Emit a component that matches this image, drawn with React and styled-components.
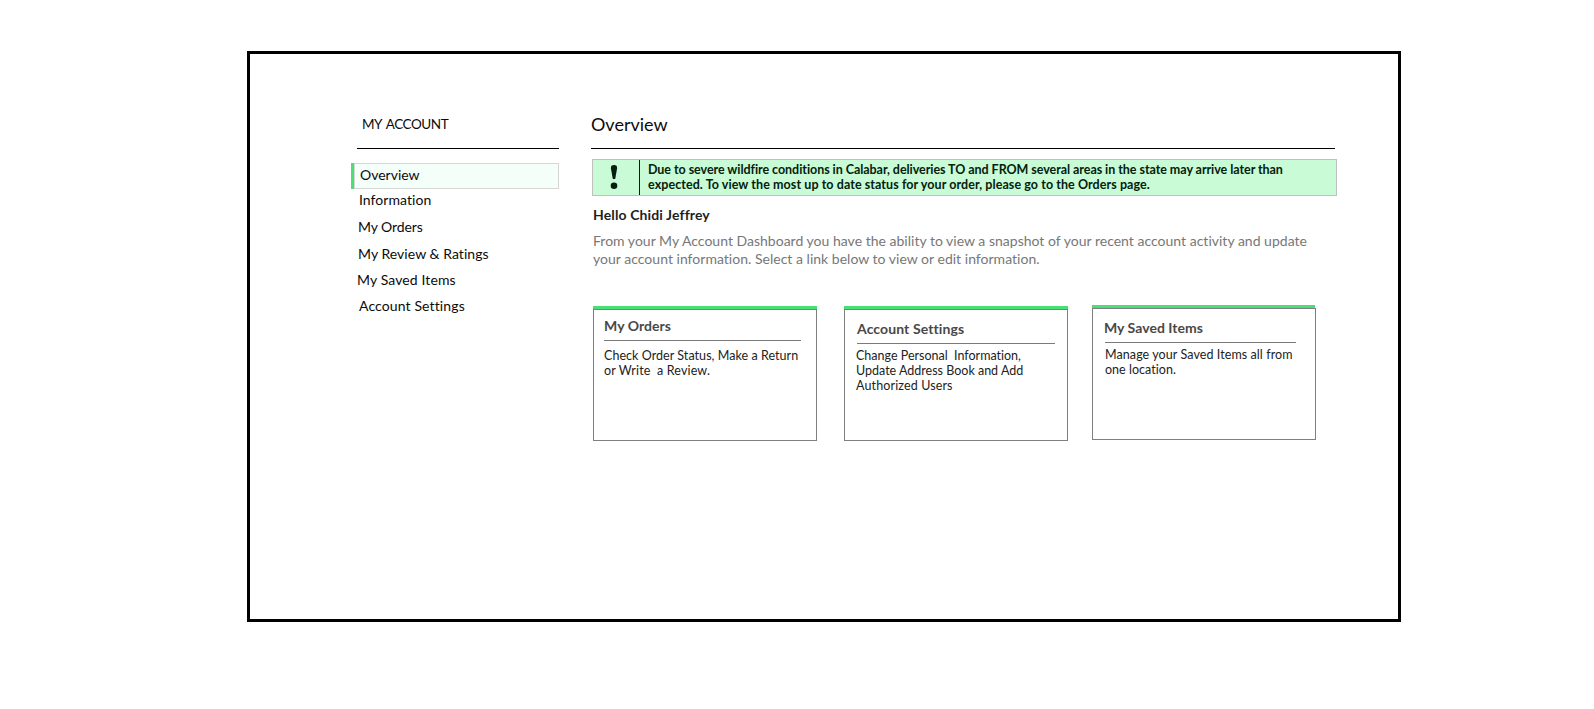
import React from 'react';
import styled, { createGlobalStyle } from 'styled-components';

const GlobalStyle = createGlobalStyle`
  * { box-sizing: border-box; }
  body {
    margin: 0;
    background: #fff;
    color: #0b0b0b;
    font-family: Lato, "Liberation Sans", sans-serif;
    font-variant-ligatures: none;
  }
  h1, h2, h3, p, ul { margin: 0; padding: 0; font-weight: 400; }
`;

const Frame = styled.div`
  width: 1154px;
  height: 571px;
  margin: 51px 0 0 247px;
  padding-left: 101px;
  border: 3px solid #000;
  display: flex;
  gap: 32px;
`;

const Page = styled.div`
  display: flow-root;
`;

const Sidebar = styled.aside`
  width: 208px;
`;

const SidebarTitle = styled.h2`
  height: 95px;
  margin-left: 6px;
  padding: 61px 0 0 5px;
  border-bottom: 1px solid #000;
  font-size: 13.5px;
  line-height: 18px;
  letter-spacing: -0.42px;
  word-spacing: 1.5px;
`;

const Nav = styled.ul`
  margin-top: 14px;
  list-style: none;
`;

const NavItem = styled.li`
  margin-top: ${(p) => p.$gap}px;
  padding-left: ${(p) => p.$indent}px;
  font-size: 14px;
  line-height: 18px;
  letter-spacing: ${(p) => p.$track || 0}px;
`;

const ActiveItem = styled.li`
  height: 26px;
  display: flex;
  border-left: 3px solid #4ade76;
  font-size: 14px;
  line-height: 18px;
`;

const ActiveLabel = styled.span`
  flex: 1;
  padding: 2px 0 0 5px;
  background: #f5fffa;
  border: 1px solid #d6d6d6;
`;

const Main = styled.main`
  width: 746px;
`;

const Heading = styled.h1`
  width: 744px;
  height: 95px;
  padding-top: 59px;
  border-bottom: 1px solid #000;
  font-size: 18px;
  line-height: 22px;
`;

const Alert = styled.div`
  height: 37px;
  margin: 10px 0 0 1px;
  display: flex;
  background: #c9fbd6;
  border: 1px solid #c0c0c0;
  color: #03210c;
`;

const AlertMark = styled.div`
  width: 47px;
  display: flex;
  justify-content: center;
  padding: 5px 4px 0 0;
  border-right: 1px solid #03210c;
`;

const AlertText = styled.div`
  padding: 2px 0 0 8px;
  font-size: 12.5px;
  line-height: 15px;
  font-weight: 700;
  white-space: nowrap;
`;

const Line = styled.div`
  letter-spacing: ${(p) => p.$track || 0}px;
  white-space: pre;
`;

const Greeting = styled.h2`
  margin: 10px 0 0 2px;
  font-size: 14px;
  line-height: 18px;
  font-weight: 700;
  letter-spacing: 0.12px;
  color: #1e1e1e;
`;

const Intro = styled.div`
  margin: 8px 0 0 2px;
  font-size: 14px;
  line-height: 18px;
  color: #777;
`;

const Cards = styled.div`
  display: flex;
  align-items: flex-start;
  margin: 38px 0 0 2px;
`;

const Card = styled.section`
  width: 224px;
  height: 135px;
  margin-left: ${(p) => p.$gap}px;
  margin-top: ${(p) => p.$lift}px;
`;

const Accent = styled.div`
  width: ${(p) => p.$width}px;
  height: 3px;
  background: #4ade76;
`;

const CardBody = styled.div`
  height: 132px;
  padding: ${(p) => p.$top}px 0 0 ${(p) => p.$left}px;
  border: 1px solid #7f7f7f;
`;

const CardTitle = styled.h3`
  width: ${(p) => p.$rule}px;
  height: 24px;
  border-bottom: 1px solid #7a7a7a;
  font-size: 14px;
  line-height: 18px;
  font-weight: 700;
  letter-spacing: ${(p) => p.$track}px;
  text-indent: ${(p) => p.$indent || 0}px;
  color: #484848;
`;

const CardText = styled.div`
  margin-top: ${(p) => p.$top}px;
  margin-left: ${(p) => p.$shift}px;
  font-size: 12.5px;
  line-height: 15px;
  color: #222;
`;

const navItems = [
  { label: 'Information', gap: 2, indent: 8, track: 0.05 },
  { label: 'My Orders', gap: 9, indent: 7, track: -0.1 },
  { label: 'My Review & Ratings', gap: 9, indent: 7, track: 0.05 },
  { label: 'My Saved Items', gap: 8, indent: 6, track: 0.12 },
  { label: 'Account Settings', gap: 8, indent: 8, track: 0.12 },
];

const cards = [
  {
    title: 'My Orders', track: 0.05, gap: 0, lift: 0, accent: 224, top: 7, left: 10, rule: 197,
    textTop: 7, shift: 0,
    lines: [['Check Order Status, Make a Return', 0.05], ['or Write  a Review.', 0.13]],
  },
  {
    title: 'Account Settings', track: 0.1, gap: 27, lift: 0, accent: 224, top: 10, left: 12, rule: 198,
    textTop: 4, shift: -1,
    lines: [['Change Personal  Information,', 0], ['Update Address Book and Add', 0], ['Authorized Users', 0.13]],
  },
  {
    title: 'My Saved Items', track: 0.03, indent: -1, gap: 24, lift: -1, accent: 223, top: 10, left: 12, rule: 191,
    textTop: 4, shift: 0,
    lines: [['Manage your Saved Items all from', 0.08], ['one location.', 0.03]],
  },
];

export default function App() {
  return (
    <Page>
      <GlobalStyle />
      <Frame>
        <Sidebar>
          <SidebarTitle>MY ACCOUNT</SidebarTitle>
          <Nav>
            <ActiveItem>
              <ActiveLabel>Overview</ActiveLabel>
            </ActiveItem>
            {navItems.map((item) => (
              <NavItem key={item.label} $gap={item.gap} $indent={item.indent} $track={item.track}>
                {item.label}
              </NavItem>
            ))}
          </Nav>
        </Sidebar>
        <Main>
          <Heading>Overview</Heading>
          <Alert>
            <AlertMark>
              <svg width="8" height="26" viewBox="0 0 8 26">
                <path d="M4 0C6.2 0 7.3 1.2 7.1 3.2L5.2 14H2.8L0.9 3.2C0.7 1.2 1.8 0 4 0Z" fill="currentColor" />
                <circle cx="4" cy="20.8" r="3.3" fill="currentColor" />
              </svg>
            </AlertMark>
            <AlertText>
              <Line $track={-0.05}>
                Due to severe wildfire conditions in Calabar, deliveries TO and FROM several areas in the state may arrive later than
              </Line>
              <Line $track={0.075}>
                expected. To view the most up to date status for your order, please go to the Orders page.
              </Line>
            </AlertText>
          </Alert>
          <Greeting>Hello Chidi Jeffrey</Greeting>
          <Intro>
            <Line $track={0.012}>
              From your My Account Dashboard you have the ability to view a snapshot of your recent account activity and update
            </Line>
            <Line $track={0.018}>your account information. Select a link below to view or edit information.</Line>
          </Intro>
          <Cards>
            {cards.map((card) => (
              <Card key={card.title} $gap={card.gap} $lift={card.lift}>
                <Accent $width={card.accent} />
                <CardBody $top={card.top} $left={card.left}>
                  <CardTitle $rule={card.rule} $track={card.track} $indent={card.indent}>{card.title}</CardTitle>
                  <CardText $top={card.textTop} $shift={card.shift}>
                    {card.lines.map(([text, track]) => (
                      <Line key={text} $track={track}>{text}</Line>
                    ))}
                  </CardText>
                </CardBody>
              </Card>
            ))}
          </Cards>
        </Main>
      </Frame>
    </Page>
  );
}
